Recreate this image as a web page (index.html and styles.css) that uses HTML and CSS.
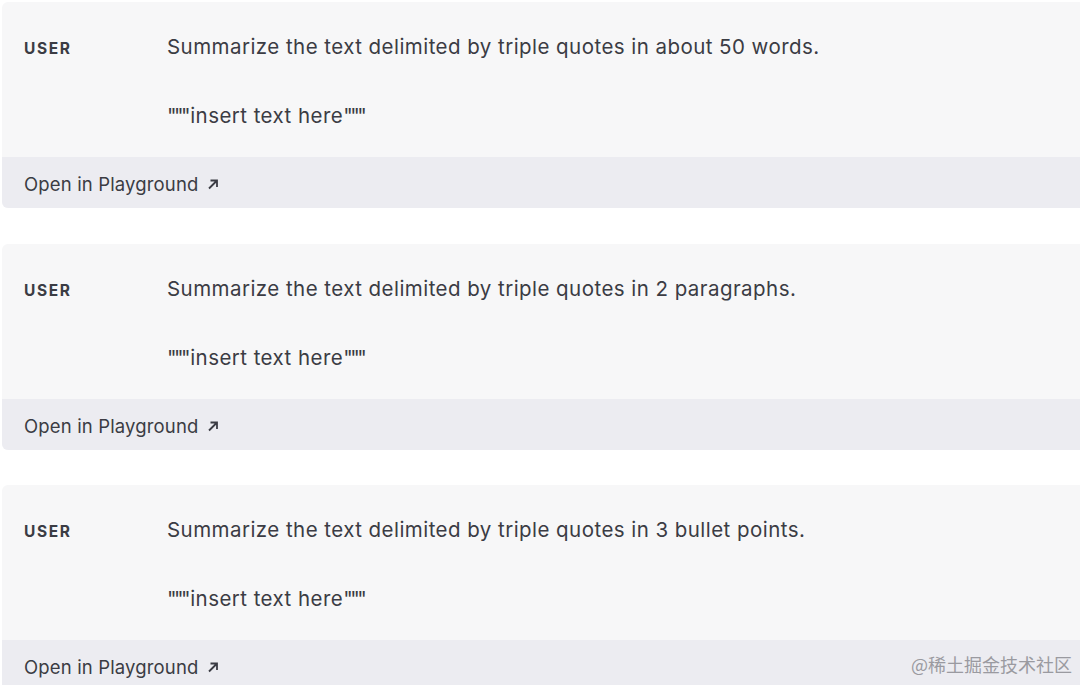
FILE: index.html
```html
<!DOCTYPE html>
<html lang="en">
<head>
<meta charset="UTF-8">
<meta name="viewport" content="width=device-width, initial-scale=1.0">
<title>Prompt examples</title>
<link rel="stylesheet" href="styles.css">
</head>
<body>
<div class="list">
  <div class="card">
    <div class="msg">
      <div class="role">USER</div>
      <div class="content">
        <p>Summarize the text delimited by triple quotes in about 50 words.</p>
        <p><span class="q">"""</span>insert text here<span class="q">"""</span></p>
      </div>
    </div>
    <div class="footer">Open in Playground <span class="arrow"><svg width="14" height="14" viewBox="0 0 14 14"><path d="M3 11.5L11 3.5M4.5 3.5h6.5v6.5" fill="none" stroke="#3b3c44" stroke-width="1.8"/></svg></span></div>
  </div>
  <div class="card">
    <div class="msg">
      <div class="role">USER</div>
      <div class="content">
        <p>Summarize the text delimited by triple quotes in 2 paragraphs.</p>
        <p><span class="q">"""</span>insert text here<span class="q">"""</span></p>
      </div>
    </div>
    <div class="footer">Open in Playground <span class="arrow"><svg width="14" height="14" viewBox="0 0 14 14"><path d="M3 11.5L11 3.5M4.5 3.5h6.5v6.5" fill="none" stroke="#3b3c44" stroke-width="1.8"/></svg></span></div>
  </div>
  <div class="card">
    <div class="msg">
      <div class="role">USER</div>
      <div class="content">
        <p>Summarize the text delimited by triple quotes in 3 bullet points.</p>
        <p><span class="q">"""</span>insert text here<span class="q">"""</span></p>
      </div>
    </div>
    <div class="footer">Open in Playground <span class="arrow"><svg width="14" height="14" viewBox="0 0 14 14"><path d="M3 11.5L11 3.5M4.5 3.5h6.5v6.5" fill="none" stroke="#3b3c44" stroke-width="1.8"/></svg></span></div>
  </div>
</div>
<div class="watermark">@稀土掘金技术社区</div>
</body>
</html>
```

FILE: styles.css
```css
body {
  margin: 0;
  background: #fff;
  font-family: Inter, "Noto Sans", sans-serif;
  color: #3b3c44;
}
.list {
  display: flex;
  flex-direction: column;
  gap: 35.5px;
  padding: 2px 0 0 2px;
}
.card {
  background: #f7f7f8;
  border-radius: 6px 0 0 6px;
  overflow: hidden;
}
.msg {
  display: flex;
  padding: 22px 0 18px 22px;
}
.role {
  width: 143px;
  flex: none;
  font-size: 15.5px;
  font-weight: 700;
  letter-spacing: 1.6px;
  padding-top: 15px;
}
.content {
  font-size: 20.5px;
  letter-spacing: 0.45px;
}
.content p {
  margin: 0;
  line-height: 46px;
  margin-bottom: 23px;
}
.content p:last-child {
  margin-bottom: 0;
}
.q {
  letter-spacing: -2.5px;
  margin-right: 2px;
}
.footer {
  background: #ececf1;
  height: 51px;
  padding: 3px 0 0 22px;
  box-sizing: border-box;
  display: flex;
  align-items: center;
  font-size: 18.5px;
  letter-spacing: 0.15px;
}
.arrow {
  margin-left: 8px;
  display: flex;
}
.watermark {
  position: absolute;
  right: 8px;
  bottom: 8px;
  font-family: "Noto Sans CJK SC", sans-serif;
  font-size: 18px;
  color: #9a9aa0;
}
```
